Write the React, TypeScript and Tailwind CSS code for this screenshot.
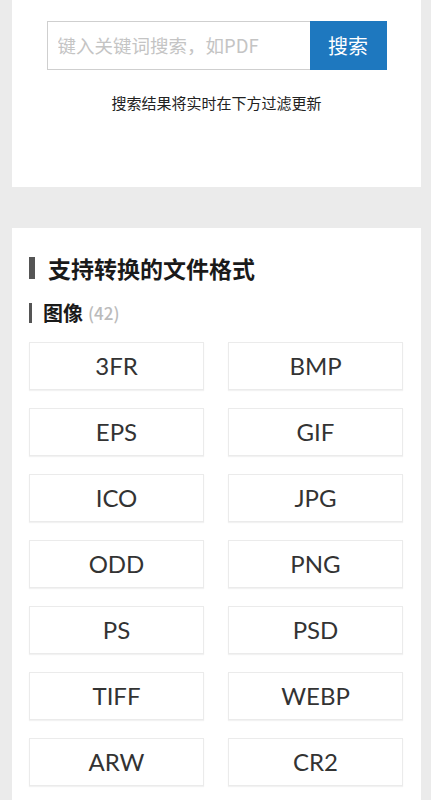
import { useState } from "react";

const cjk = { fontFamily: '"Noto Sans CJK SC", "Noto Sans", sans-serif' };

const imageFormats = ["3FR", "BMP", "EPS", "GIF", "ICO", "JPG", "ODD", "PNG", "PS", "PSD", "TIFF", "WEBP", "ARW", "CR2"];

function SearchCard() {
  const [query, setQuery] = useState("");

  return (
    <section className="ml-[12px] mr-[10px] bg-white pt-[21px] pb-[73px]">
      <div className="mx-auto flex h-[49px] w-[340px]">
        <input
          value={query}
          onChange={(e) => setQuery(e.target.value)}
          placeholder="键入关键词搜索，如PDF"
          className="min-w-0 flex-1 border border-[#cfcfcf] border-r-0 px-[10px] text-[18.5px] text-[#333] outline-none placeholder:text-[#c4c4c4]"
          style={cjk}
        />
        <button className="w-[77px] bg-[#1e78bf] text-[20px] text-white" style={cjk}>
          搜索
        </button>
      </div>
      <p className="mt-[22px] text-center text-[15px] leading-[22px] text-[#222]" style={cjk}>
        搜索结果将实时在下方过滤更新
      </p>
    </section>
  );
}

function FormatTile({ name }: { name: string }) {
  return (
    <div
      className="flex h-[48px] items-center justify-center border border-[#ebebeb] shadow-[0_1px_1px_rgba(0,0,0,0.05)] text-[24px] text-[#333]"
      style={{ fontFamily: 'Lato, "Open Sans", sans-serif' }}
    >
      {name}
    </div>
  );
}

function FormatsCard() {
  return (
    <section className="mt-[41px] ml-[12px] mr-[10px] bg-white pt-[24px] pl-[17px] pr-[18px] pb-[20px]">
      <h2 className="flex items-center text-[23px] font-bold leading-[32px] text-[#1a1a1a]" style={cjk}>
        <span className="mr-[13px] h-[22px] w-[6px] bg-[#555]" />
        支持转换的文件格式
      </h2>
      <h3 className="mt-[14px] flex items-center leading-[30px]" style={cjk}>
        <span className="mr-[11px] h-[20px] w-[3px] bg-[#555]" />
        <span className="text-[20px] font-bold text-[#1a1a1a]">图像</span>
        <span className="ml-[5px] text-[17px] font-medium text-[#bbb]">(42)</span>
      </h3>
      <div className="mt-[14px] grid grid-cols-2 gap-x-[24px] gap-y-[18px]">
        {imageFormats.map((f) => (
          <FormatTile key={f} name={f} />
        ))}
      </div>
    </section>
  );
}

export default function App() {
  return (
    <div className="min-h-screen bg-[#ebebeb]">
      <SearchCard />
      <FormatsCard />
    </div>
  );
}
